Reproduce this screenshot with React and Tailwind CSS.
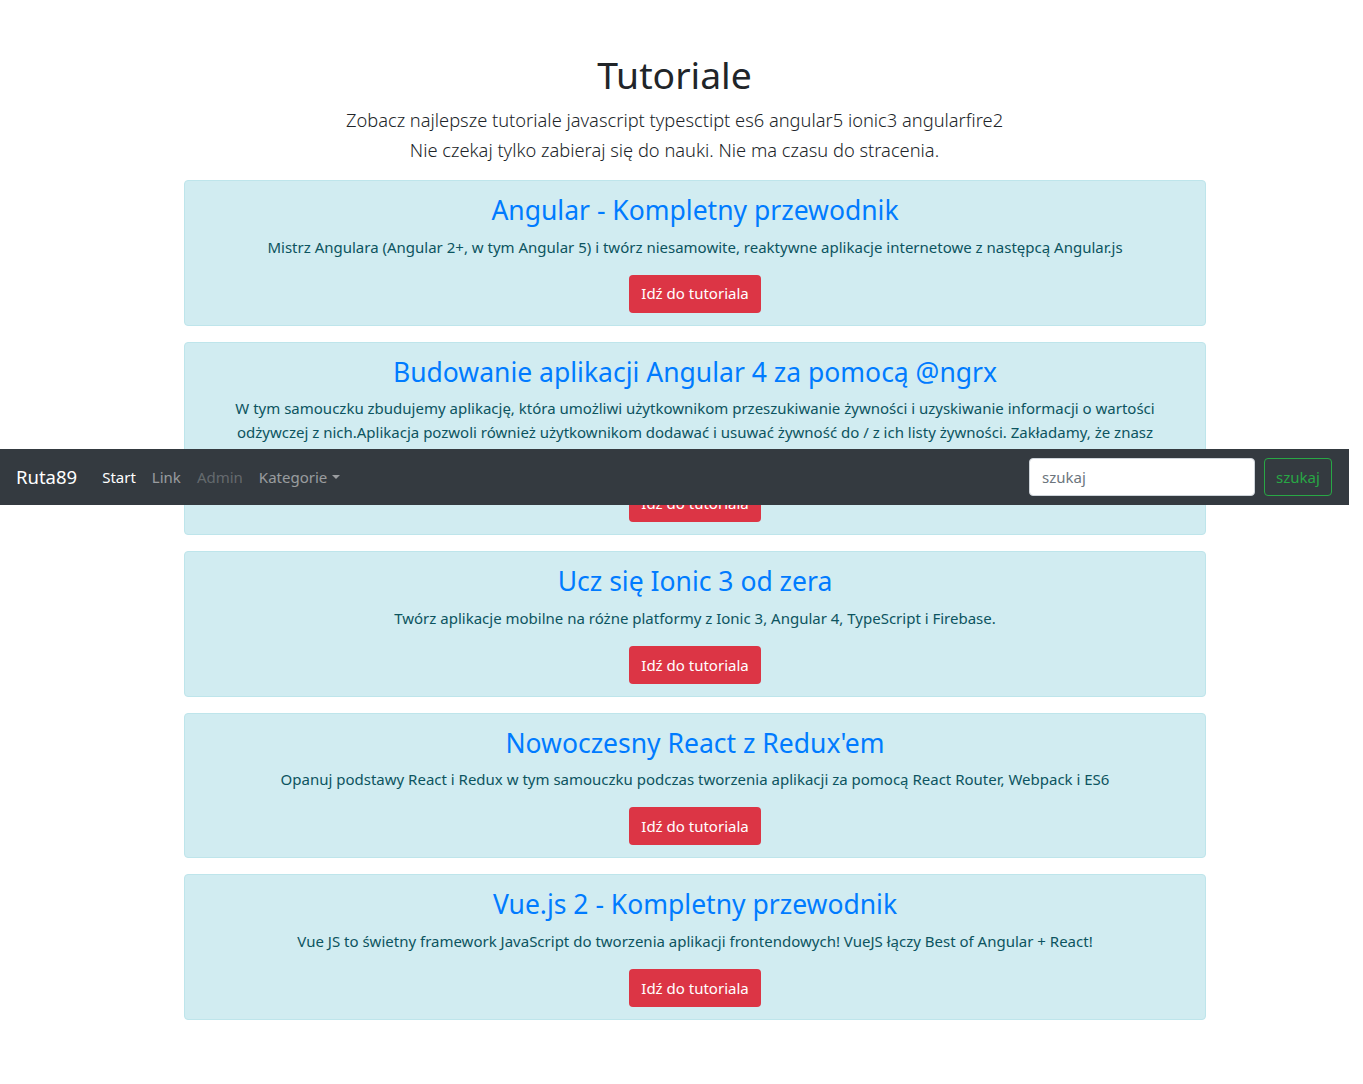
import React from 'react';

const tutorials = [
  {
    title: 'Angular - Kompletny przewodnik',
    lines: ['Mistrz Angulara (Angular 2+, w tym Angular 5) i twórz niesamowite, reaktywne aplikacje internetowe z następcą Angular.js'],
  },
  {
    title: 'Budowanie aplikacji Angular 4 za pomocą @ngrx',
    lines: [
      'W tym samouczku zbudujemy aplikację, która umożliwi użytkownikom przeszukiwanie żywności i uzyskiwanie informacji o wartości',
      'odżywczej z nich.Aplikacja pozwoli również użytkownikom dodawać i usuwać żywność do / z ich listy żywności. Zakładamy, że znasz',
      'podstawy Angulara, TypeScript i RxJS.',
    ],
  },
  {
    title: 'Ucz się Ionic 3 od zera',
    lines: ['Twórz aplikacje mobilne na różne platformy z Ionic 3, Angular 4, TypeScript i Firebase.'],
  },
  {
    title: "Nowoczesny React z Redux'em",
    lines: ['Opanuj podstawy React i Redux w tym samouczku podczas tworzenia aplikacji za pomocą React Router, Webpack i ES6'],
  },
  {
    title: 'Vue.js 2 - Kompletny przewodnik',
    lines: ['Vue JS to świetny framework JavaScript do tworzenia aplikacji frontendowych! VueJS łączy Best of Angular + React!'],
  },
];

const Navbar = () => (
  <nav className="absolute left-0 top-[449px] w-[1349px] h-[56px] bg-[#343a40] flex items-center pl-4 pr-[17px]">
    <a className="text-[18.5px] text-white mr-[17px] leading-[30px]">Ruta89</a>
    <ul className="flex items-center text-[15px]">
      <li className="px-2 text-white">Start</li>
      <li className="px-2 text-white/50">Link</li>
      <li className="px-2 text-white/25">Admin</li>
      <li className="px-2 text-white/50 flex items-center">
        Kategorie
        <span className="ml-[5px] w-0 h-0 border-l-[4px] border-r-[4px] border-t-[4px] border-l-transparent border-r-transparent border-t-white/50" />
      </li>
    </ul>
    <div className="ml-auto flex items-center">
      <input
        type="text"
        placeholder="szukaj"
        className="w-[226px] h-[38px] bg-white rounded border border-[#ced4da] px-3 text-[15px] text-[#495057] placeholder-[#6c757d] mr-[9px] outline-none"
      />
      <button className="w-[68px] h-[38px] rounded border border-[#28a745] text-[#28a745] text-[15px]">szukaj</button>
    </div>
  </nav>
);

const TutorialCard = ({ tutorial }) => (
  <div className="bg-[#d1ecf1] border border-[#bee5eb] rounded px-5 py-3 text-center mb-4">
    <h3 className="pt-[2px] text-[26.5px] leading-[31.6px] text-[#007bff] mb-2">{tutorial.title}</h3>
    <p className="text-[15px] leading-[24px] text-[#0c5460] mb-4">
      {tutorial.lines.map((line, i) => (
        <span key={i} className="block whitespace-nowrap">{line}</span>
      ))}
    </p>
    <button className="h-[38px] px-3 rounded bg-[#dc3545] text-white text-[15px]">Idź do tutoriala</button>
  </div>
);

const App = () => {
  return (
    <div className="relative w-[1363px] min-h-[1084px] bg-white text-[#212529]" style={{ fontFamily: '"Noto Sans", sans-serif' }}>
      <div className="w-[1349px] pt-[51px]">
        <div className="text-center">
          <h1 className="text-[37.3px] leading-[48px]">Tutoriale</h1>
          <p className="mt-[6px] text-[18.3px] leading-[30px] font-light">
            Zobacz najlepsze tutoriale javascript typesctipt es6 angular5 ionic3 angularfire2
            <br />
            Nie czekaj tylko zabieraj się do nauki. Nie ma czasu do stracenia.
          </p>
        </div>
        <div className="ml-[184px] w-[1022px] mt-[15px]">
          {tutorials.map((t, i) => (
            <TutorialCard key={i} tutorial={t} />
          ))}
        </div>
      </div>
      <Navbar />
    </div>
  );
};

export default App;
